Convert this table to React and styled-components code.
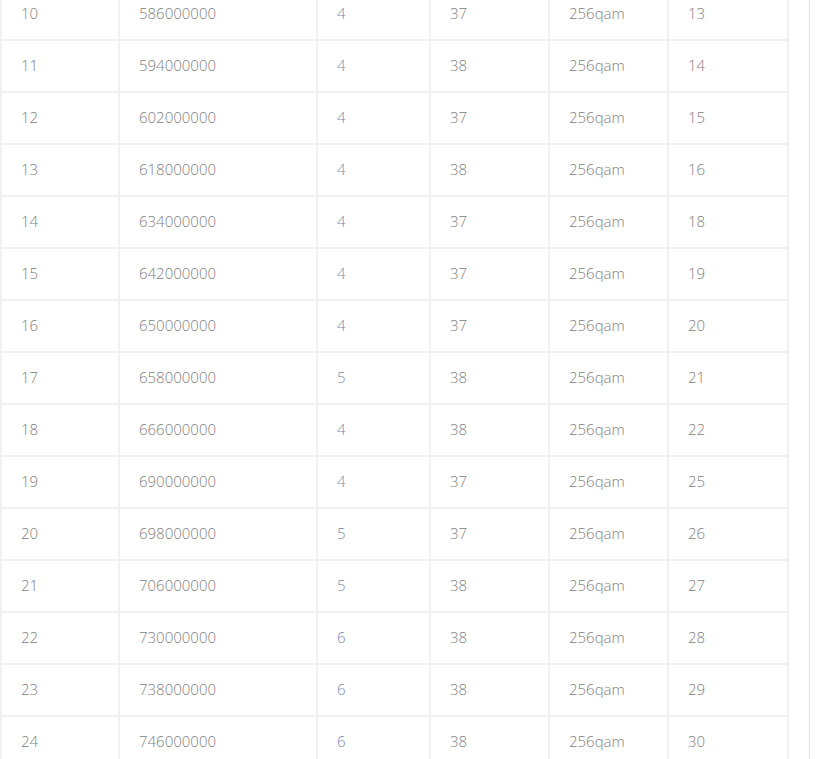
import React from 'react';
import styled, { createGlobalStyle } from 'styled-components';

const GlobalStyle = createGlobalStyle`
    html, body {
        margin: 0;
        padding: 0;
        background: #fff;
        overflow: hidden;
    }
    body {
        font-family: "Open Sans", "Liberation Sans", sans-serif;
    }
`;

const Wrap = styled.div`
    width: 809px;
    height: 759px;
    border-right: 1px solid #e2e2e2;
    overflow: hidden;
`;

const Table = styled.table`
    width: 789px;
    margin-top: -13px;
    border-collapse: collapse;
    table-layout: fixed;
`;

const Cell = styled.td`
    height: 47px;
    padding: 0 16px 3px 19px;
    border: 2px solid #f1f1f1;
    font-size: 15px;
    font-weight: 300;
    color: ${(props) => (props.$accent ? '#7d8cae' : '#808080')};
    vertical-align: middle;
    white-space: nowrap;
`;

const rows = [
    [10, 586000000, 4, 37, '256qam', 13],
    [11, 594000000, 4, 38, '256qam', 14],
    [12, 602000000, 4, 37, '256qam', 15],
    [13, 618000000, 4, 38, '256qam', 16],
    [14, 634000000, 4, 37, '256qam', 18],
    [15, 642000000, 4, 37, '256qam', 19],
    [16, 650000000, 4, 37, '256qam', 20],
    [17, 658000000, 5, 38, '256qam', 21],
    [18, 666000000, 4, 38, '256qam', 22],
    [19, 690000000, 4, 37, '256qam', 25],
    [20, 698000000, 5, 37, '256qam', 26],
    [21, 706000000, 5, 38, '256qam', 27],
    [22, 730000000, 6, 38, '256qam', 28],
    [23, 738000000, 6, 38, '256qam', 29],
    [24, 746000000, 6, 38, '256qam', 30],
];

const widths = [118, 198, 113, 119, 119, 120];

const App = () => {
    return (
        <>
            <GlobalStyle />
            <Wrap>
                <Table>
                    <colgroup>
                        {widths.map((w, i) => (
                            <col key={i} style={{ width: w }} />
                        ))}
                    </colgroup>
                    <tbody>
                        {rows.map((row) => (
                            <tr key={row[0]}>
                                {row.map((value, i) => (
                                    <Cell key={i} $accent={i === 2}>
                                        {value}
                                    </Cell>
                                ))}
                            </tr>
                        ))}
                    </tbody>
                </Table>
            </Wrap>
        </>
    );
};

export default App;
